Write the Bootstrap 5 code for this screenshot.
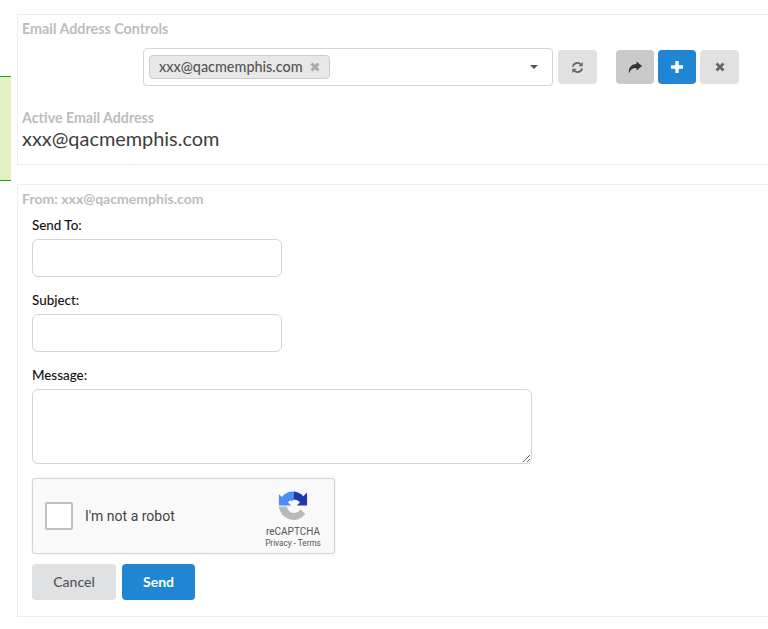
<!DOCTYPE html>
<html lang="en">
<head>
  <meta charset="UTF-8" />
  <meta name="viewport" content="width=device-width, initial-scale=1.0"/>
  <title>Email</title>
  <link href="https://cdn.jsdelivr.net/npm/bootstrap@5.3.0/dist/css/bootstrap.min.css" rel="stylesheet"/>
  <style>
    html, body { height: 629px; overflow: hidden; }
    body {
      font-family: Lato, "Liberation Sans", sans-serif;
      font-size: 14px;
      color: #333;
      padding: 14px 0 0 17px;
      position: relative;
    }
    .side-note {
      position: absolute;
      left: 0;
      top: 76px;
      width: 11px;
      height: 105px;
      background: #e2f1c4;
      border-top: 1px solid #1fa800;
      border-bottom: 1px solid #1fa800;
    }
    .box-panel {
      width: 780px;
      border: 1px solid #eee;
      padding: 5px 4px;
    }
    .box-title {
      font-weight: 700;
      font-size: 14.3px;
      line-height: 18px;
      color: #bdbdbd;
    }
    .controls-row { padding-left: 121px; height: 38px; margin-top: 10px; }
    .picker {
      width: 410px;
      height: 38px;
      border: 1px solid #d5d5d5;
      border-radius: 4px;
      padding: 5px;
    }
    .picker-tag {
      height: 24px;
      padding: 0 9px;
      background: #e8e8e8;
      border: 1px solid #ccc;
      border-radius: 4px;
      color: #555;
      font-weight: 500;
      font-size: 14.4px;
      gap: 7px;
    }
    .picker-caret {
      border-left: 4px solid transparent;
      border-right: 4px solid transparent;
      border-top: 4px solid #555;
      margin-right: 9px;
    }
    .square-btn {
      height: 34px;
      padding: 0;
      border: 0;
      border-radius: 4px;
      background: #e0e1e3;
      color: #666;
    }
    .refresh-btn { margin-left: 5px; }
    .btn-group-gap { margin-left: 19px; }
    .w-39 { width: 39px; }
    .w-38 { width: 38px; }
    .square-btn.is-pressed { background: #c8c9cb; color: #333; }
    .square-btn.is-blue, .send-btn { background: #2086d4; color: #fff; }
    .active-label { margin-top: 23px; font-size: 14.2px; }
    .active-value { font-size: 19.9px; line-height: 22px; color: #3d3d3d; margin-bottom: 10px; }
    .form-panel { margin-top: 19px; height: 433px; }
    .form-panel .box-title { font-size: 14.05px; }
    .form-body { padding: 8px 0 0 10px; }
    .field-label { color: #111; font-size: 13.4px; line-height: 18px; font-weight: 500; margin-bottom: 5px; display: block; }
    .field-input { width: 250px; height: 38px; border-color: #d5d5d5; margin-bottom: 14px; }
    .field-area { width: 500px; height: 75px; border-color: #d5d5d5; margin-bottom: 14px; }
    .captcha-box {
      width: 303px;
      height: 76px;
      background: #f9f9f9;
      border: 1px solid #d3d3d3;
      border-radius: 3px;
      box-shadow: 0 0 3px rgba(0,0,0,.08);
      font-family: Roboto, "Liberation Sans", sans-serif;
      padding: 0 12px;
    }
    .captcha-check { width: 28px; height: 28px; background: #fff; border: 2px solid #c1c1c1; border-radius: 2px; }
    .captcha-text { font-size: 14px; color: #444; margin-left: 12px; }
    .captcha-brand { margin-left: auto; width: 58px; color: #555; margin-top: 6px; }
    .captcha-name { font-size: 10px; line-height: 12px; margin-top: 5px; }
    .captcha-links { font-size: 8.2px; line-height: 11px; white-space: nowrap; }
    .action-row { margin-top: 10px; gap: 6px; }
    .cancel-btn, .send-btn {
      height: 36px;
      border: 0;
      border-radius: 4px;
      font-size: 14px;
      padding: 0 0 2px;
    }
    .cancel-btn { width: 84px; background: #e0e1e3; color: #555; font-weight: 500; }
    .send-btn { width: 73px; font-weight: 700; }
  </style>
</head>
<body>
  <div class="side-note"></div>

  <div class="box-panel">
    <div class="box-title">Email Address Controls</div>
    <div class="controls-row d-flex align-items-center">
      <div class="picker d-flex align-items-center justify-content-between flex-shrink-0">
        <span class="picker-tag d-inline-flex align-items-center">xxx@qacmemphis.com
          <svg width="10" height="10" viewBox="0 0 10 10"><path d="M1.5 1.5l7 7M8.5 1.5l-7 7" stroke="#aaa" stroke-width="3" fill="none"/></svg>
        </span>
        <span class="picker-caret"></span>
      </div>
      <button class="square-btn refresh-btn w-39 d-flex align-items-center justify-content-center flex-shrink-0" type="button" aria-label="Refresh">
        <svg width="13" height="13" viewBox="0 0 14 14" fill="none" stroke="#666" stroke-width="2">
          <path d="M2 6a5 5 0 0 1 8.7-2.2"/><path d="M12 8a5 5 0 0 1-8.7 2.2"/>
          <path d="M12.6 1v4.6H8z" fill="#666" stroke="none"/><path d="M1.4 13V8.4H6z" fill="#666" stroke="none"/>
        </svg>
      </button>
      <div class="btn-group-gap d-flex gap-1 flex-shrink-0">
        <button class="square-btn is-pressed w-38 d-flex align-items-center justify-content-center" type="button" aria-label="Forward">
          <svg width="14" height="13" viewBox="0 0 14 13"><path d="M8.5 0.5L14 5l-5.5 4.5V7C5 7 2.5 8 1 12.5 0 7.5 3 3 8.5 3z" fill="#333"/></svg>
        </button>
        <button class="square-btn is-blue w-38 d-flex align-items-center justify-content-center" type="button" aria-label="Add">
          <svg width="12" height="12" viewBox="0 0 12 12"><path d="M6 0v12M0 6h12" stroke="#fff" stroke-width="3.4" fill="none"/></svg>
        </button>
        <button class="square-btn w-39 d-flex align-items-center justify-content-center" type="button" aria-label="Remove">
          <svg width="10" height="10" viewBox="0 0 10 10"><path d="M1.5 1.5l7 7M8.5 1.5l-7 7" stroke="#666" stroke-width="2.8" fill="none"/></svg>
        </button>
      </div>
    </div>
    <div class="box-title active-label">Active Email Address</div>
    <div class="active-value">xxx@qacmemphis.com</div>
  </div>

  <div class="box-panel form-panel">
    <div class="box-title">From: xxx@qacmemphis.com</div>
    <form class="form-body">
      <label class="field-label" for="sendTo">Send To:</label>
      <input class="form-control field-input" id="sendTo" type="text">
      <label class="field-label" for="subject">Subject:</label>
      <input class="form-control field-input" id="subject" type="text">
      <label class="field-label" for="message">Message:</label>
      <textarea class="form-control field-area" id="message"></textarea>
      <div class="captcha-box d-flex align-items-center">
        <span class="captcha-check flex-shrink-0"></span>
        <span class="captcha-text">I'm not a robot</span>
        <div class="captcha-brand d-flex flex-column align-items-center">
          <svg width="30" height="31" viewBox="0 0 32 32">
            <path d="M17 1A15 15 0 0 1 27 6L31 2V16H20L23.500 12.500Q21 9.500 17 9.500Q15 10.500 14 12Z" fill="#1c3aa9"/>
            <path d="M17 1A15 15 0 0 0 4 7L1 4V16H14L10.500 12.500Q13 9.500 17 9.500Z" fill="#4a8ef6"/>
            <path d="M1 17H9.500Q11 24 17 24Q21 24 24 20L29 25A15.500 15.500 0 0 1 1 17Z" fill="#b9b9b9"/>
          </svg>
          <div class="captcha-name">reCAPTCHA</div>
          <div class="captcha-links">Privacy - Terms</div>
        </div>
      </div>
      <div class="action-row d-flex">
        <button class="cancel-btn" type="button">Cancel</button>
        <button class="send-btn" type="button">Send</button>
      </div>
    </form>
  </div>

  <script src="https://cdn.jsdelivr.net/npm/bootstrap@5.3.0/dist/js/bootstrap.bundle.min.js"></script>
</body>
</html>
